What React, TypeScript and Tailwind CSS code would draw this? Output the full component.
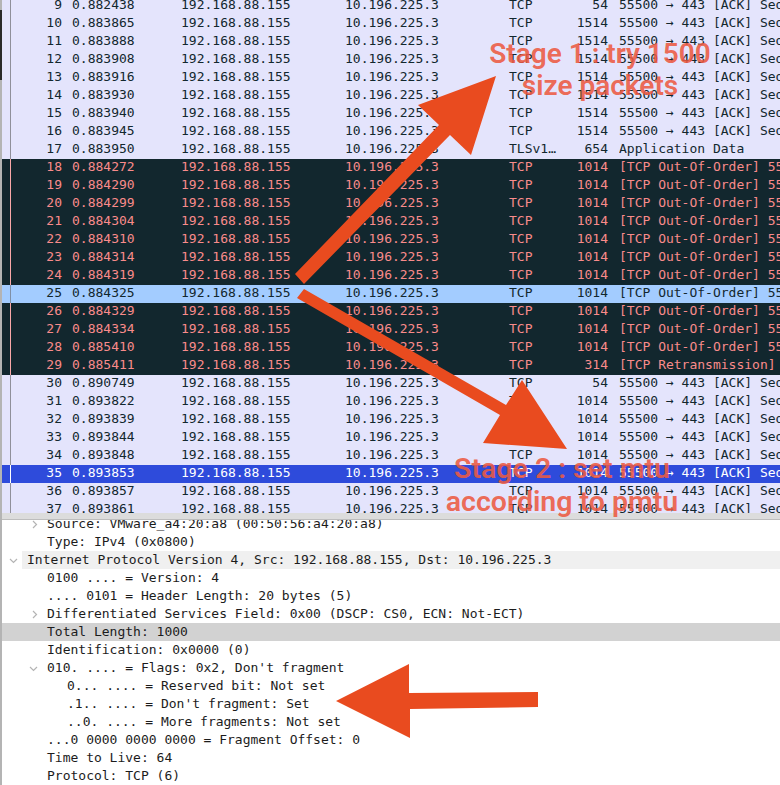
const mono = "font-['DejaVu_Sans_Mono',monospace] text-[13px] whitespace-pre";

type Kind = "light" | "dark" | "hover" | "selected";

const ACK = "55500 → 443 [ACK] Seq=";
const OOO = "[TCP Out-Of-Order] 55500 → 443";

const packets: [number, string, string, string, string, Kind][] = [
  [9, "0.882438", "TCP", "54", ACK, "light"],
  [10, "0.883865", "TCP", "1514", ACK, "light"],
  [11, "0.883888", "TCP", "1514", ACK, "light"],
  [12, "0.883908", "TCP", "1514", ACK, "light"],
  [13, "0.883916", "TCP", "1514", ACK, "light"],
  [14, "0.883930", "TCP", "1514", ACK, "light"],
  [15, "0.883940", "TCP", "1514", ACK, "light"],
  [16, "0.883945", "TCP", "1514", ACK, "light"],
  [17, "0.883950", "TLSv1…", "654", "Application Data", "light"],
  [18, "0.884272", "TCP", "1014", OOO, "dark"],
  [19, "0.884290", "TCP", "1014", OOO, "dark"],
  [20, "0.884299", "TCP", "1014", OOO, "dark"],
  [21, "0.884304", "TCP", "1014", OOO, "dark"],
  [22, "0.884310", "TCP", "1014", OOO, "dark"],
  [23, "0.884314", "TCP", "1014", OOO, "dark"],
  [24, "0.884319", "TCP", "1014", OOO, "dark"],
  [25, "0.884325", "TCP", "1014", OOO, "hover"],
  [26, "0.884329", "TCP", "1014", OOO, "dark"],
  [27, "0.884334", "TCP", "1014", OOO, "dark"],
  [28, "0.885410", "TCP", "1014", OOO, "dark"],
  [29, "0.885411", "TCP", "314", "[TCP Retransmission] 55500", "dark"],
  [30, "0.890749", "TCP", "54", ACK, "light"],
  [31, "0.893822", "TCP", "1014", ACK, "light"],
  [32, "0.893839", "TCP", "1014", ACK, "light"],
  [33, "0.893844", "TCP", "1014", ACK, "light"],
  [34, "0.893848", "TCP", "1014", ACK, "light"],
  [35, "0.893853", "TCP", "1014", ACK, "selected"],
  [36, "0.893857", "TCP", "1014", ACK, "light"],
  [37, "0.893861", "TCP", "1014", ACK, "light"],
];

const rowStyles: Record<Kind, string> = {
  light: "bg-[#e4e4fc] text-[#12272e]",
  dark: "bg-[#12272e] text-[#f98b8b]",
  hover: "bg-[#a3ccff] text-[#12272e]",
  selected: "bg-[#2e4bdb] text-white",
};

const lineStyles: Record<Kind, string> = {
  light: "border-[#8f8f9a]",
  dark: "border-[#f9a8a8]",
  hover: "border-[#7f8fa6]",
  selected: "border-white",
};

const details: { text: string; indent: number; open?: boolean; shut?: boolean; kind?: "head" | "active" }[] = [
  { text: "Source: VMware_a4:20:a8 (00:50:56:a4:20:a8)", indent: 47, shut: true },
  { text: "Type: IPv4 (0x0800)", indent: 47 },
  { text: "Internet Protocol Version 4, Src: 192.168.88.155, Dst: 10.196.225.3", indent: 27, open: true, kind: "head" },
  { text: "0100 .... = Version: 4", indent: 47 },
  { text: ".... 0101 = Header Length: 20 bytes (5)", indent: 47 },
  { text: "Differentiated Services Field: 0x00 (DSCP: CS0, ECN: Not-ECT)", indent: 47, shut: true },
  { text: "Total Length: 1000", indent: 47, kind: "active" },
  { text: "Identification: 0x0000 (0)", indent: 47 },
  { text: "010. .... = Flags: 0x2, Don't fragment", indent: 47, open: true },
  { text: "0... .... = Reserved bit: Not set", indent: 67 },
  { text: ".1.. .... = Don't fragment: Set", indent: 67 },
  { text: "..0. .... = More fragments: Not set", indent: 67 },
  { text: "...0 0000 0000 0000 = Fragment Offset: 0", indent: 47 },
  { text: "Time to Live: 64", indent: 47 },
  { text: "Protocol: TCP (6)", indent: 47 },
];

const Chevron = ({ open, x }: { open?: boolean; x: number }) => (
  <svg width="9" height="9" viewBox="0 0 9 9" className="absolute top-[5px]" style={{ left: x }}>
    <polyline
      points={open ? "1,3 4.5,6.5 8,3" : "3,1 6.5,4.5 3,8"}
      fill="none"
      stroke="#b4b4b4"
      strokeWidth="1.2"
    />
  </svg>
);

const PacketRow = ({ p }: { p: (typeof packets)[number] }) => {
  const [no, time, proto, len, info, kind] = p;
  return (
    <div className={`flex h-[18px] leading-[16px] ${mono} ${rowStyles[kind]}`}>
      <div className={`w-[9px] shrink-0 border-r ${lineStyles[kind]}`} />
      <div className="w-[51px] shrink-0 text-right">{no}</div>
      <div className="ml-[10px] w-[109px] shrink-0">{time}</div>
      <div className="w-[164px] shrink-0">192.168.88.155</div>
      <div className="w-[164px] shrink-0">10.196.225.3</div>
      <div className="w-[60px] shrink-0">{proto}</div>
      <div className="w-[39px] shrink-0 text-right">{len}</div>
      <div className="ml-[11px] overflow-hidden">{info}</div>
    </div>
  );
};

// the hand drawn arrows and notes sit on top of the capture
const Annotations = () => (
  <>
    <svg width="780" height="785" viewBox="0 0 780 785" className="absolute left-0 top-0">
      <polygon points="295,274 304,284 450,135 471,155 496,76 418,105 439,125" fill="#e94b1f" />
      <polygon points="304,289 297,298 500,415 483,443 567,449 522,380 506,405" fill="#e94b1f" />
      <polygon points="538,692 538,707 410,709 410,738 336,701 409,664 409,693" fill="#e94b1f" />
    </svg>
    <div className="absolute left-[479px] top-[38px] w-[242px] text-center font-['Roboto',sans-serif] text-[28px] font-semibold leading-[32px] text-[#ec5a42]/90">
      Stage 1 : try 1500 size packets
    </div>
    <div className="absolute left-[437px] top-[452px] w-[250px] text-center font-['Roboto',sans-serif] text-[28.5px] font-semibold leading-[33px] text-[#ec5a42]/90">
      Stage 2 : set mtu according to pmtu
    </div>
  </>
);

export default function App() {
  return (
    <div className="relative flex h-[785px] w-[780px] overflow-hidden bg-white">
      <div className="flex w-[2px] shrink-0 flex-col bg-[#b4b4b4]">
        <div className="mt-[10px] h-[70px] bg-[#2a2a2a]" />
      </div>
      <div className="flex min-w-0 flex-1 flex-col">
        <div className="h-[513px] shrink-0 overflow-hidden">
          <div className="-mt-[3px]">
            {packets.map((p) => (
              <PacketRow key={p[0]} p={p} />
            ))}
          </div>
        </div>
        <div className="h-[7px] shrink-0 border-b border-[#bdbdbd] bg-[#dcdcdc]" />
        <div className="min-h-0 flex-1 overflow-hidden">
          <div className="-mt-[5px]">
            {details.map((d) => (
              <div
                key={d.text}
                className={`relative h-[18px] leading-[18px] text-[#1c1c1c] ${mono} ${d.kind === "active" ? "bg-[#d2d2d2]" : ""}`}
                style={{ paddingLeft: d.indent - 2 }}
              >
                {d.kind === "head" && <div className="absolute inset-y-0 left-[20px] right-0 bg-[#f0f0f0]" />}
                {d.open && <Chevron open x={d.indent - 20} />}
                {d.shut && <Chevron x={d.indent - 19} />}
                <span className="relative">{d.text}</span>
              </div>
            ))}
          </div>
        </div>
      </div>
      <Annotations />
    </div>
  );
}
